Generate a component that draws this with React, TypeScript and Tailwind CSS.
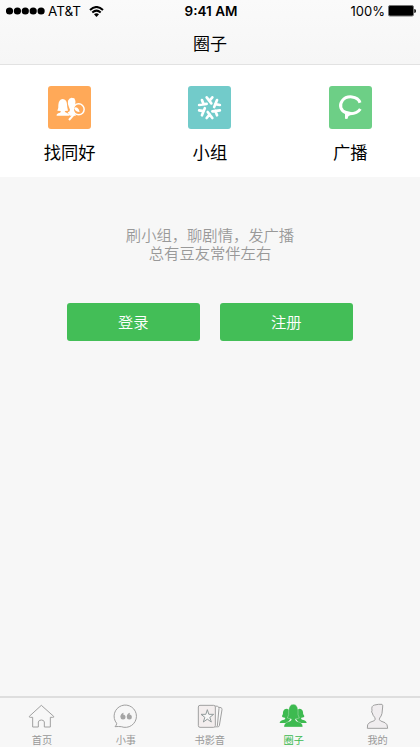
import type { ReactNode } from "react";

const tiles: { label: string; color: string; icon: ReactNode }[] = [
  {
    label: "找同好",
    color: "bg-[#ffa958]",
    icon: (
      <g>
        <path
          fill="#fff"
          d="M81 122Q79 116 91 113Q94 112 93 108L83 107Q87 102 86 90Q87 73 99 72Q111 73 112 88Q112 98 115 107L105 108Q106 112 112 114L118 118L118 122Z"
        />
        <path
          fill="#fff"
          d="M118 97Q113 87 115 77Q118 70 125 68L134 70Q139 77 137 88Q133 99 132 105Q133 114 139 122L120 122L114 112Q121 110 121 104Z"
        />
        <circle cx="147" cy="103" r="16.5" fill="#ffa958" stroke="#fff" strokeWidth="4.5" />
        <path d="M135 116L118 135" stroke="#fff" strokeWidth="6" />
        <path d="M133 98Q142 94 147 103L150 111Q137 111 133 98Z" fill="#fff" />
      </g>
    ),
  },
  {
    label: "小组",
    color: "bg-[#72cbca]",
    icon: (
      <g stroke="#fff" strokeWidth="8" fill="none" strokeLinecap="round">
        {[0, 60, 120, 180, 240, 300].map((angle) => (
          <path key={angle} transform={`rotate(${angle} 119.5 98)`} d="M111 67L125 85M128 67L119 78" />
        ))}
      </g>
    ),
  },
  {
    label: "广播",
    color: "bg-[#6dcf86]",
    icon: (
      <g>
        <path
          d="M148 83C141 62 108 60 95 77C84 92 91 107 105 113M116 116Q139 117 149 102"
          fill="none"
          stroke="#fff"
          strokeWidth="9"
        />
        <path d="M99 106L124 112L119 120Q112 122 110 132L103 131Q106 119 99 106Z" fill="#fff" />
      </g>
    ),
  },
];

const tabs: { label: string; box: string; active?: boolean; icon: ReactNode }[] = [
  {
    label: "首页",
    box: "81 36 90 84",
    icon: (
      <path d="M124 46L88 79Q87 82 91 82H98V111H115V96Q116 90 124 90Q132 90 133 96V111H151V82H158Q163 82 161 79Z" />
    ),
  },
  {
    label: "小事",
    box: "333 36 90 84",
    icon: (
      <g>
        <path d="M350 100A33.5 33.5 0 1 1 364 110Q356 109 345 110Q350 106 350 100Z" />
        <g fill="#a5a5a5" stroke="none">
          <circle cx="369" cy="81" r="7.5" />
          <circle cx="388" cy="81" r="7.5" />
          <path d="M361.5 81Q361 70 371 68L369 76ZM380.5 81Q380 70 390 68L388 76Z" />
        </g>
      </g>
    ),
  },
  {
    label: "书影音",
    box: "45 36 90 84",
    icon: (
      <g>
        <path fill="#f3eeee" d="M60 46H101Q106 46 106 51V107Q106 112 101 112H60Q55 112 55 107V51Q55 46 60 46Z" />
        <path d="M106 48L113 49Q117 50 117 55L112 108Q111 112 106 111M117 52L123 53Q127 55 126 59L118 107Q117 111 112 111" />
        <path
          fill="#f7f7f7"
          stroke="#929b9b"
          d="M82 59L86.5 73H101L89.5 82L94 96L82 87.5L70 96L74.5 82L63 73H77.5Z"
        />
      </g>
    ),
  },
  {
    label: "圈子",
    box: "297 36 90 84",
    active: true,
    icon: (
      <g fill="#3dba50" stroke="none">
        <path d="M299 99Q299 92 312 89Q318 87 315 83Q306 83 306 78Q310 74 309 66Q311 56 321 56Q328 57 331 66L332 86L322 99Z" />
        <path d="M380 99Q380 92 367 89Q361 87 364 83Q373 83 373 78Q368 74 369 66Q368 57 358 56Q351 57 348 66L347 86L357 99Z" />
        <path
          stroke="#f7f7f7"
          strokeWidth="1"
          d="M312 111Q311 99 325 95Q335 93 334 87L322 84Q328 76 326 60Q328 43 340 43Q352 43 354 60Q352 76 358 84L346 87Q346 94 356 96Q369 99 368 111Z"
        />
      </g>
    ),
  },
  {
    label: "我的",
    box: "129 36 90 84",
    icon: (
      <path
        fill="#f0edef"
        d="M142 115Q140 101 150 97L163 92Q168 88 164 82Q158 76 157 69Q153 67 156 61Q153 47 164 45L175 43H186Q189 44 188 51L186 70Q184 79 179 84Q176 90 182 93L195 98Q203 102 203 115Z"
      />
    ),
  },
];

function StatusBar() {
  return (
    <div className="relative flex h-[22px] items-center justify-between pl-[6px] pr-[4px] text-black">
      <div className="flex items-center">
        <svg width="39" height="8" viewBox="0 0 39 8">
          {[3.5, 11.4, 19.3, 27.2, 35.1].map((x) => (
            <circle key={x} cx={x} cy="4" r="3.6" />
          ))}
        </svg>
        <span className="ml-[3px] w-[33px] font-['Inter',sans-serif] text-[13.5px] leading-[20px]">AT&amp;T</span>
        <svg className="ml-[8px]" width="15" height="11" viewBox="0 0 15 11" fill="none" stroke="#000" strokeWidth="2">
          <path d="M1 4Q7.5 -2 14 4M3.3 6.5Q7.5 2.8 11.7 6.5" />
          <path d="M7.5 11L5 8.3Q7.5 6.3 10 8.3Z" fill="#000" stroke="none" />
        </svg>
      </div>
      <span className="absolute inset-x-0 pl-[2px] text-center font-['Inter',sans-serif] text-[13.5px] font-semibold leading-[20px]">
        9:41 AM
      </span>
      <div className="flex items-center">
        <span className="mr-[3px] font-['Inter',sans-serif] text-[13px] leading-[20px]">100%</span>
        <svg width="28" height="12" viewBox="0 0 28 12">
          <rect x="0.5" y="0.5" width="25" height="10.5" rx="1.5" fill="#000" stroke="#777" />
          <path d="M26.3 4Q28 4 28 6Q28 8 26.3 8Z" />
        </svg>
      </div>
    </div>
  );
}

export default function App() {
  return (
    <div
      lang="zh-CN"
      className="flex h-[747px] w-[420px] flex-col overflow-hidden bg-[#f7f7f7] font-['Noto_Sans_CJK_SC',sans-serif]"
    >
      <header className="h-[65px] border-b border-[#e2e2e2] bg-linear-to-b from-[#fafafa] to-[#f6f6f6]">
        <StatusBar />
        <h1 className="text-center text-[17px] leading-[41px] text-black">圈子</h1>
      </header>
      <nav className="-ml-[0.6px] grid h-[112px] w-[421px] grid-cols-3 bg-white pt-[21px]">
        {tiles.map((tile) => (
          <div key={tile.label} className="flex flex-col items-center">
            <div className={`size-[43px] rounded-[3px] ${tile.color}`}>
              <svg width="43" height="43" viewBox="55 33 129 129">
                {tile.icon}
              </svg>
            </div>
            <span className="mt-[11px] text-[17.3px] leading-[24px] text-black">{tile.label}</span>
          </div>
        ))}
      </nav>
      <main className="flex flex-1 flex-col items-center">
        <p className="mt-[49px] text-center text-[15.3px] font-[350] leading-[17.5px] text-[#999]">
          刷小组，聊剧情，发广播
          <br />
          总有豆友常伴左右
        </p>
        <div className="mt-[42px] flex gap-[20.5px] pr-[0.5px] text-[15.3px] font-[350] text-white">
          <button className="h-[37.5px] w-[132.5px] rounded-[3px] bg-[#43be57]">登录</button>
          <button className="h-[37.5px] w-[132.5px] rounded-[3px] bg-[#43be57]">注册</button>
        </div>
      </main>
      <footer className="flex h-[51px] border-t-2 border-[#dedede] pr-[0.5px]">
        {tabs.map((tab) => (
          <div
            key={tab.label}
            className={`flex flex-1 flex-col items-center pt-[4px] text-[10.2px] leading-[14px] ${tab.active ? "text-[#3dba50]" : "text-[#999]"}`}
          >
            <svg width="30" height="28" viewBox={tab.box} fill="none" stroke="#a0a0a0" strokeWidth="3">
              {tab.icon}
            </svg>
            <span className="mt-[3px]">{tab.label}</span>
          </div>
        ))}
      </footer>
    </div>
  );
}
